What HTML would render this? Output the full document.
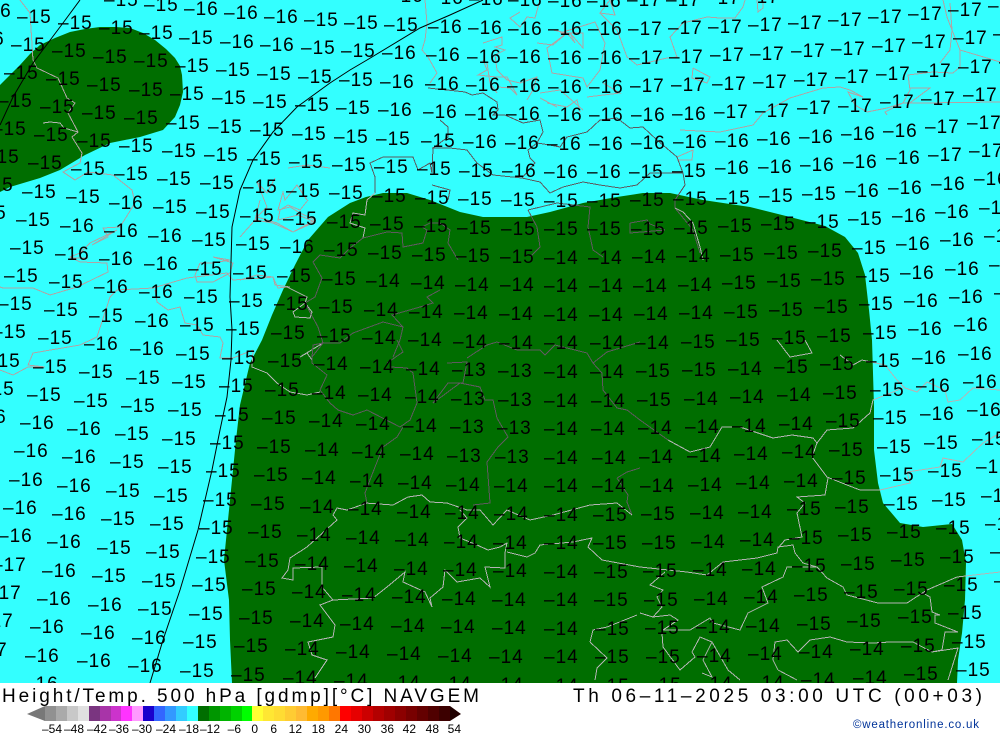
<!DOCTYPE html>
<html><head><meta charset="utf-8"><title>Height/Temp. 500 hPa NAVGEM</title>
<style>
html,body{margin:0;padding:0;background:#fff}
svg{display:block;font-family:"Liberation Sans",sans-serif}
.l{fill:none;stroke:#b0a4a4;stroke-width:1}
.g{fill:none;stroke:#b4b4b4;stroke-width:1}
.d{fill:none;stroke:#5e5a5e;stroke-width:1}
.k{fill:none;stroke:#000;stroke-width:1}
</style></head><body>
<svg width="1000" height="733" viewBox="0 0 1000 733" xmlns="http://www.w3.org/2000/svg">
<rect width="1000" height="733" fill="#33ffff"/>
<polygon fill="#006e00" points="232,683 230,640 229,600 224,560 228,520 232,480 236,440 240,405 250,363 262,340 272,315 283,290 295,265 308,240 328,217 350,203 366,197 383,193 407,193 430,200 460,212 483,217 527,217 550,212 583,203 617,197 643,193 670,193 703,200 750,207 790,217 825,226 845,237 858,253 865,275 869,310 872,340 873,373 874,407 874,450 878,483 883,503 900,523 923,527 952,524 962,540 966,563 965,600 962,633 958,660 957,683"/>
<polygon fill="#006e00" points="0,85 10,75 20,65 30,54 40,45 55,38 70,32 85,29 100,27 115,27 130,28 143,33 155,40 166,49 175,58 180,66 182,75 183,92 180,105 175,117 163,130 140,137 110,143 85,155 60,170 40,178 10,187 0,192"/>
<g shape-rendering="crispEdges">
<polyline class="l" points="20,0 30,13 33,60 37,68 58,78 67,98 75,103 68,113 78,132 72,137 82,153 80,163 63,172 75,180 88,172 113,175 132,190 135,203 120,227 103,228 108,237 92,245 117,230"/>
<polyline class="g" points="43,123 50,122 60,123 64,128 78,132"/>
<polyline class="l" points="288,168 307,165 330,168"/>
<polyline class="l" points="275,178 267,193 257,182 267,207 257,217 277,223 293,232 315,220 300,213 290,207 278,210 283,192 285,200 297,185 307,200"/>
<polyline class="l" points="425,0 427,23 425,40 422,50 428,57 437,73 430,83"/>
<polyline class="l" points="520,12 510,18 520,27 527,17 535,18 540,0"/>
<polyline class="l" points="483,43 502,37 502,45 495,47 505,50 495,55 497,70 507,80 520,83 537,77 533,90 527,100"/>
<polyline class="l" points="487,63 490,83 497,93"/>
<polyline class="l" points="553,30 567,33 575,43 570,33 583,48 583,33 560,33"/>
<polyline class="l" points="537,43 553,45 567,33 547,48 552,73 583,78 587,87 600,70 605,43 595,22 560,33"/>
<polyline class="l" points="610,0 600,13 615,15 610,0"/>
<polyline class="l" points="600,13 617,30 627,57 637,65 667,58 677,57 670,37 683,23 707,17 720,18 735,18 743,7 745,0"/>
<polyline class="l" points="693,68 710,77 707,83 692,78 693,68"/>
<polyline class="l" points="757,0 758,12 763,8 763,0"/>
<polyline class="l" points="540,93 560,90 583,110"/>
<polyline class="l" points="540,98 557,107"/>
<polyline class="l" points="587,97 620,93 603,83"/>
<polyline class="l" points="483,60 487,70 478,75 497,77 507,77 517,95 510,88 498,87"/>
<polyline class="l" points="547,103 567,107 577,100 580,112"/>
<polyline class="l" points="680,130 720,132 753,125 763,113 790,98 823,88 840,87 850,90 863,97 848,92 855,105 867,112 887,108 903,103 920,103 1000,102"/>
<polyline class="l" points="887,115 885,112 903,103 910,90 908,75 933,72 953,73 960,67 960,50 952,30 947,17 943,0"/>
<polyline class="l" points="940,63 950,50 952,30 950,3"/>
<polyline class="l" points="960,50 987,58 1000,62"/>
<polyline class="l" points="910,88 930,88 907,105"/>
<polyline class="l" points="677,157 693,150 692,160 677,160"/>
<polyline class="l" points="0,287 3,288 33,288 50,295 77,287 108,272 107,263 80,262 70,257 80,253 90,243 117,230"/>
<polyline class="l" points="72,258 88,258"/>
<polyline class="l" points="0,370 13,375 28,367 45,367 28,365 33,353 80,345 97,337 110,297 117,290 153,288 187,278 227,273 233,280 263,278 273,277 275,285 290,287"/>
<polyline class="l" points="200,263 213,263 230,260 213,257 233,263 230,273 213,282 197,282 195,275 200,263"/>
<polyline class="l" points="155,290 157,302 168,310 180,307 185,323 197,325 203,335 220,337 223,343 220,358 233,358 253,350"/>
<polyline class="g" points="253,350 252,367 267,373 277,383 290,392 307,395 320,392"/>
<polyline class="l" points="260,200 255,220 240,237"/>
<polyline class="l" points="255,220 273,223 293,232 315,222 298,215 278,220 280,210 288,205 300,210 308,200"/>
<polyline class="l" points="240,280 257,275 273,277 278,288 287,287"/>
<polyline class="g" points="287,287 307,297 305,303 312,312 310,318 295,317 293,312 305,303"/>
<polyline class="d" points="428,88 447,90 465,92 472,95 483,93 497,102 498,110 493,115 505,115 523,123 540,120 543,132 537,143 528,150 530,158 535,163 522,178"/>
<polyline class="d" points="537,143 550,145 560,147 567,137 587,132 600,120 617,118 630,128 643,127 657,140 677,157 683,173 685,185 675,200 675,208 693,230 700,253"/>
<polyline class="d" points="432,148 450,148 467,150 477,163 493,175 522,178 540,182 550,193 563,187 583,182 600,185 620,188 637,185 650,173 683,173"/>
<polyline class="d" points="440,120 448,127 448,137 433,148 432,173"/>
<polyline class="d" points="432,185 450,190 448,200"/>
<polyline class="d" points="375,193 375,177 370,163 383,157 413,157 418,170 430,163 432,173"/>
<polyline class="g" points="375,193 367,200 365,215 353,213 350,223 365,228 363,238"/>
<polyline class="d" points="363,238 350,248 340,258 320,255 313,262 322,278 315,297 305,303 318,327 323,343 340,343 353,333 383,322 403,327 400,340 393,357"/>
<polyline class="d" points="363,238 387,232 402,233 403,247 423,243 427,230 422,227 430,223 440,223 450,230 448,243 458,260"/>
<polyline class="d" points="440,290 427,297 433,303 420,307 392,315 403,327"/>
<polyline class="g" points="323,343 300,357 307,353 312,360"/>
<polyline class="d" points="528,210 537,227 540,247 530,257"/>
<polyline class="d" points="528,210 557,203 590,207 588,227 593,250 603,257"/>
<polyline class="d" points="630,223 647,220 650,224 665,230 630,233 630,223"/>
<polyline class="g" points="675,208 683,212 693,223 700,247 703,260"/>
<polyline class="d" points="312,357 313,345 323,343 312,357 312,363 327,375 320,390 330,403 338,410 353,415 367,410 400,427 410,420 417,403 413,373 407,368 390,367"/>
<polyline class="d" points="403,427 397,437 383,447 375,467 365,493 367,503"/>
<polyline class="d" points="447,363 467,362 463,383 448,383 433,403 460,383 480,387 485,400 493,400 497,418 508,437 498,447 487,462 490,503 473,505"/>
<polyline class="d" points="397,340 403,352 387,363"/>
<polyline class="d" points="467,358 487,345 497,342 517,350 530,350 540,350 545,355 555,345 587,353 593,363 607,352 640,342"/>
<polyline class="d" points="593,363 602,373 603,390 617,408 627,410 640,420 668,440"/>
<polyline class="d" points="617,478 627,472 640,468"/>
<polyline class="d" points="617,478 628,495 627,502 632,515"/>
<polyline class="g" points="668,440 690,452 710,447 722,427 740,427 773,438 792,435 813,438 817,443 812,457 827,477 847,485 860,490 880,490 910,483 907,472 940,467 943,458 963,462 983,443 1000,433"/>
<polyline class="g" points="817,443 827,430 853,428 870,413 873,400 903,388"/>
<polyline class="g" points="828,478 825,495 797,497 805,503 797,513 802,537 785,540 778,548"/>
<polyline class="g" points="777,340 790,357 812,353 805,340"/>
<polyline class="g" points="840,355 853,365 862,360 885,365 897,380 905,388 917,392 927,382 945,390 948,402 960,400 973,388 1000,390"/>
<polyline class="g" points="367,503 347,510 337,508 333,515 337,520 307,547 290,558 288,570 282,578 293,580 293,568 322,567 322,587 333,600 320,605 335,625 333,637 308,642 312,655 327,660 315,678"/>
<polyline class="g" points="365,503 393,505 408,497 422,495 430,502 447,503 467,510 480,510 493,525 507,510 530,520 553,515 590,505 617,503 632,515"/>
<polyline class="g" points="333,600 373,598 387,587 405,572 403,582 425,592 432,607 430,598 443,587 445,570 457,582 480,578 490,587 485,567 505,568 505,553 507,543 500,547 488,550 477,545 460,538 458,527 467,518 460,510"/>
<polyline class="g" points="507,552 527,557 535,553 540,545 573,542 592,538 588,547 602,560 640,567 687,572 707,575 723,562 757,558 777,553 778,547 793,545 795,553 803,563 817,567 827,578 843,587 847,595 878,603 907,603 927,590 957,577 1000,572"/>
<polyline class="g" points="640,613 653,617 670,615 678,620 663,630 690,630 710,618 713,623 740,630 748,613 768,603 762,587 783,577 787,567 817,567"/>
<polyline class="g" points="650,585 665,572 650,585 663,590 657,597 662,607 653,617"/>
<polyline class="g" points="662,633 663,647 680,670 695,657 692,652 700,637 712,642 728,670 740,680"/>
<polyline class="g" points="712,642 703,660 712,677 702,673"/>
<polyline class="g" points="778,670 773,660 775,642 787,640 798,652 810,640 830,637 847,642 873,643 890,642 913,642 932,652 942,650 945,632 958,632 935,623 935,615 940,615 932,612 930,597 923,593"/>
<polyline class="g" points="778,670 797,680"/>
<polyline class="g" points="932,652 958,648 948,680"/>
<polyline class="g" points="590,642 593,630 607,627 637,615"/>
<polyline class="g" points="590,642 607,658 597,668 595,680"/>
</g>
<polyline class="k" points="80,0 63,23 33,63 13,97 0,125"/>
<polyline class="k" points="483,0 450,15 420,28 367,60 350,70 330,83 297,107 273,132 253,160 240,190 232,227 230,297 232,330 231,360 227,397 220,430 212,470 198,530 180,590 163,640 150,683"/>
<g transform="translate(-23,6)" font-size="19" letter-spacing="1" fill="#000">
<g transform="translate(4,0)"><text x="408" y="-4">–16</text><text x="448" y="-2">–16</text><text x="488" y="-1">–16</text><text x="527" y="0">–16</text><text x="567" y="1">–16</text><text x="606" y="1">–16</text><text x="646" y="0">–17</text><text x="685" y="0">–17</text><text x="725" y="-2">–17</text><text x="764" y="-3">–17</text></g>
<text x="127" y="0">–15</text><text x="167" y="5">–15</text><text x="207" y="9">–16</text><text x="247" y="13">–16</text><text x="287" y="17">–16</text><text x="327" y="20">–15</text><text x="367" y="23">–15</text><text x="407" y="25">–15</text><g transform="translate(4,0)"><text x="447" y="27">–16</text><text x="487" y="28">–16</text><text x="527" y="29">–16</text><text x="567" y="29">–16</text><text x="607" y="29">–16</text><text x="647" y="29">–17</text><text x="687" y="28">–17</text><text x="727" y="27">–17</text><text x="767" y="25">–17</text><text x="807" y="23">–17</text><text x="847" y="20">–17</text><text x="887" y="17">–17</text><text x="927" y="14">–17</text><text x="967" y="10">–17</text><text x="1007" y="6">–17</text></g>
<text x="0" y="11">–16</text><text x="40" y="17">–15</text><text x="81" y="23">–15</text><text x="122" y="28">–15</text><text x="162" y="33">–15</text><text x="202" y="38">–15</text><text x="243" y="42">–16</text><text x="283" y="45">–16</text><text x="324" y="48">–15</text><text x="364" y="51">–15</text><text x="405" y="53">–16</text><g transform="translate(4,0)"><text x="445" y="55">–16</text><text x="486" y="57">–16</text><text x="526" y="57">–16</text><text x="567" y="58">–16</text><text x="607" y="58">–16</text><text x="648" y="58">–17</text><text x="688" y="57">–17</text><text x="729" y="55">–17</text><text x="769" y="54">–17</text><text x="810" y="51">–17</text><text x="850" y="49">–17</text><text x="891" y="46">–17</text><text x="931" y="42">–17</text><text x="972" y="38">–17</text><text x="1012" y="34">–17</text></g>
<text x="-7" y="39">–16</text><text x="34" y="45">–15</text><text x="75" y="51">–15</text><text x="116" y="57">–15</text><text x="157" y="61">–15</text><text x="198" y="66">–15</text><text x="239" y="70">–15</text><text x="280" y="74">–15</text><text x="321" y="77">–15</text><text x="362" y="80">–15</text><text x="403" y="82">–16</text><g transform="translate(4,0)"><text x="444" y="84">–16</text><text x="485" y="85">–16</text><text x="526" y="86">–16</text><text x="567" y="87">–16</text><text x="608" y="87">–16</text><text x="649" y="86">–17</text><text x="690" y="85">–17</text><text x="731" y="84">–17</text><text x="772" y="82">–17</text><text x="813" y="80">–17</text><text x="854" y="77">–17</text><text x="895" y="74">–17</text><text x="936" y="71">–17</text><text x="977" y="67">–17</text><text x="1018" y="62">–17</text></g>
<text x="27" y="73">–15</text><text x="69" y="79">–15</text><text x="110" y="85">–15</text><text x="152" y="90">–15</text><text x="193" y="94">–15</text><text x="235" y="98">–15</text><text x="276" y="102">–15</text><text x="318" y="105">–15</text><text x="359" y="108">–15</text><text x="401" y="110">–16</text><g transform="translate(4,0)"><text x="442" y="112">–16</text><text x="484" y="114">–16</text><text x="525" y="114">–16</text><text x="567" y="115">–16</text><text x="608" y="115">–16</text><text x="650" y="115">–16</text><text x="691" y="114">–16</text><text x="733" y="112">–17</text><text x="774" y="111">–17</text><text x="816" y="108">–17</text><text x="857" y="106">–17</text><text x="899" y="102">–17</text><text x="940" y="99">–17</text><text x="982" y="95">–17</text></g>
<text x="21" y="101">–15</text><text x="63" y="107">–15</text><text x="105" y="113">–15</text><text x="147" y="118">–15</text><text x="189" y="123">–15</text><text x="231" y="127">–15</text><text x="273" y="130">–15</text><text x="315" y="134">–15</text><text x="357" y="137">–15</text><text x="399" y="139">–15</text><g transform="translate(3,0)"><text x="441" y="141">–15</text><text x="483" y="142">–16</text><text x="525" y="143">–16</text><text x="567" y="144">–16</text><text x="609" y="144">–16</text><text x="651" y="143">–16</text><text x="693" y="142">–16</text><text x="735" y="141">–16</text><text x="777" y="139">–16</text><text x="819" y="137">–16</text><text x="861" y="134">–16</text><text x="903" y="131">–16</text><text x="945" y="127">–17</text><text x="987" y="123">–17</text></g>
<text x="15" y="129">–15</text><text x="57" y="135">–15</text><text x="100" y="141">–15</text><text x="142" y="146">–15</text><text x="185" y="151">–15</text><text x="227" y="155">–15</text><text x="270" y="159">–15</text><text x="312" y="162">–15</text><text x="355" y="165">–15</text><text x="397" y="167">–15</text><text x="440" y="169">–15</text><text x="482" y="171">–15</text><text x="525" y="171">–16</text><text x="567" y="172">–16</text><text x="610" y="172">–16</text><text x="652" y="172">–15</text><text x="695" y="171">–15</text><text x="738" y="168">–16</text><text x="781" y="167">–16</text><text x="823" y="165">–16</text><text x="866" y="162">–16</text><text x="909" y="158">–16</text><text x="951" y="155">–17</text><text x="992" y="151">–17</text>
<text x="8" y="157">–15</text><text x="51" y="163">–15</text><text x="94" y="169">–15</text><text x="137" y="174">–15</text><text x="180" y="179">–15</text><text x="223" y="183">–15</text><text x="266" y="187">–15</text><text x="309" y="191">–15</text><text x="352" y="193">–15</text><text x="395" y="196">–15</text><text x="438" y="198">–15</text><text x="481" y="199">–15</text><text x="524" y="200">–15</text><text x="567" y="201">–15</text><text x="610" y="201">–15</text><text x="653" y="200">–15</text><text x="696" y="199">–15</text><text x="739" y="198">–15</text><text x="782" y="196">–15</text><text x="825" y="194">–15</text><text x="868" y="191">–16</text><text x="911" y="188">–16</text><text x="954" y="184">–16</text><text x="997" y="179">–16</text>
<text x="2" y="185">–15</text><text x="45" y="192">–15</text><text x="89" y="197">–15</text><text x="132" y="203">–16</text><text x="176" y="207">–15</text><text x="219" y="212">–15</text><text x="263" y="216">–15</text><text x="306" y="219">–15</text><text x="350" y="222">–15</text><text x="393" y="224">–15</text><text x="437" y="226">–15</text><text x="480" y="228">–15</text><text x="524" y="229">–15</text><text x="567" y="229">–15</text><text x="610" y="229">–15</text><text x="654" y="229">–15</text><text x="697" y="228">–15</text><text x="741" y="226">–15</text><text x="784" y="224">–15</text><text x="828" y="222">–15</text><text x="871" y="219">–15</text><text x="915" y="216">–16</text><text x="958" y="212">–16</text><text x="1002" y="208">–16</text>
<text x="-5" y="213">–15</text><text x="39" y="220">–15</text><text x="83" y="226">–16</text><text x="127" y="231">–16</text><text x="171" y="236">–16</text><text x="215" y="240">–15</text><text x="259" y="244">–15</text><text x="303" y="247">–16</text><text x="347" y="250">–15</text><text x="391" y="253">–15</text><text x="435" y="255">–15</text><text x="479" y="256">–15</text><text x="523" y="257">–15</text><text x="567" y="258">–14</text><text x="611" y="258">–14</text><text x="655" y="257">–14</text><text x="699" y="256">–14</text><text x="743" y="255">–15</text><text x="787" y="253">–15</text><text x="831" y="251">–15</text><text x="875" y="248">–15</text><text x="919" y="244">–16</text><text x="963" y="240">–16</text><text x="1007" y="236">–16</text>
<text x="33" y="248">–15</text><text x="78" y="254">–16</text><text x="122" y="259">–16</text><text x="167" y="264">–16</text><text x="211" y="269">–15</text><text x="256" y="273">–15</text><text x="300" y="276">–15</text><text x="345" y="279">–15</text><text x="389" y="281">–14</text><text x="434" y="283">–14</text><text x="478" y="285">–14</text><text x="523" y="285">–14</text><text x="567" y="286">–14</text><text x="612" y="286">–14</text><text x="656" y="286">–14</text><text x="701" y="285">–14</text><text x="745" y="283">–15</text><text x="790" y="281">–15</text><text x="834" y="279">–15</text><text x="879" y="276">–15</text><text x="923" y="273">–16</text><text x="968" y="269">–16</text><text x="1012" y="265">–16</text>
<text x="27" y="276">–15</text><text x="72" y="282">–15</text><text x="117" y="287">–16</text><text x="162" y="292">–16</text><text x="207" y="297">–15</text><text x="252" y="301">–15</text><text x="297" y="304">–15</text><text x="342" y="307">–15</text><text x="387" y="310">–14</text><text x="432" y="312">–14</text><text x="477" y="313">–14</text><text x="522" y="314">–14</text><text x="567" y="315">–14</text><text x="612" y="315">–14</text><text x="657" y="314">–14</text><text x="702" y="313">–14</text><text x="747" y="312">–15</text><text x="792" y="310">–15</text><text x="837" y="307">–15</text><text x="882" y="304">–15</text><text x="927" y="301">–16</text><text x="972" y="297">–16</text><text x="1017" y="293">–16</text>
<text x="21" y="304">–15</text><text x="67" y="310">–15</text><text x="112" y="316">–15</text><text x="158" y="321">–16</text><text x="203" y="325">–15</text><text x="249" y="329">–15</text><text x="294" y="333">–15</text><text x="340" y="336">–15</text><text x="385" y="338">–14</text><text x="431" y="340">–14</text><text x="476" y="342">–14</text><text x="522" y="343">–14</text><text x="567" y="343">–14</text><text x="613" y="343">–14</text><text x="658" y="343">–14</text><text x="704" y="342">–15</text><text x="749" y="340">–15</text><text x="795" y="338">–15</text><text x="840" y="336">–15</text><text x="886" y="333">–15</text><text x="931" y="329">–16</text><text x="977" y="325">–16</text>
<text x="15" y="332">–15</text><text x="61" y="338">–15</text><text x="107" y="344">–16</text><text x="153" y="349">–16</text><text x="199" y="354">–15</text><text x="245" y="358">–15</text><text x="291" y="361">–15</text><text x="337" y="364">–14</text><text x="383" y="367">–14</text><text x="429" y="369">–14</text><text x="475" y="370">–13</text><text x="521" y="371">–13</text><text x="567" y="372">–14</text><text x="613" y="372">–14</text><text x="659" y="371">–15</text><text x="705" y="370">–15</text><text x="751" y="369">–14</text><text x="797" y="367">–15</text><text x="843" y="364">–15</text><text x="889" y="361">–15</text><text x="935" y="358">–16</text><text x="981" y="354">–16</text>
<text x="9" y="361">–15</text><text x="56" y="367">–15</text><text x="102" y="372">–15</text><text x="149" y="378">–15</text><text x="195" y="382">–15</text><text x="242" y="386">–15</text><text x="288" y="390">–15</text><text x="335" y="393">–14</text><text x="381" y="395">–14</text><text x="428" y="397">–14</text><text x="474" y="399">–13</text><text x="521" y="400">–13</text><text x="567" y="401">–14</text><text x="614" y="401">–14</text><text x="660" y="400">–15</text><text x="707" y="399">–14</text><text x="753" y="397">–14</text><text x="800" y="395">–14</text><text x="846" y="393">–15</text><text x="893" y="390">–15</text><text x="939" y="386">–16</text><text x="986" y="382">–16</text>
<text x="3" y="389">–15</text><text x="50" y="395">–15</text><text x="97" y="401">–15</text><text x="144" y="406">–15</text><text x="191" y="410">–15</text><text x="238" y="415">–15</text><text x="285" y="418">–15</text><text x="332" y="421">–14</text><text x="379" y="424">–14</text><text x="426" y="426">–14</text><text x="473" y="427">–13</text><text x="520" y="428">–13</text><text x="567" y="429">–14</text><text x="614" y="429">–14</text><text x="661" y="428">–14</text><text x="708" y="427">–14</text><text x="755" y="426">–14</text><text x="802" y="424">–14</text><text x="849" y="421">–15</text><text x="896" y="418">–15</text><text x="943" y="414">–16</text><text x="990" y="410">–16</text>
<g transform="translate(-2,0)"><text x="-3" y="417">–16</text><text x="45" y="423">–16</text><text x="92" y="429">–16</text><text x="140" y="434">–15</text><text x="187" y="439">–15</text><text x="235" y="443">–15</text><text x="282" y="447">–15</text><text x="330" y="450">–14</text><text x="377" y="452">–14</text><text x="425" y="454">–14</text><text x="472" y="456">–13</text><text x="520" y="457">–13</text></g><text x="567" y="458">–14</text><text x="615" y="458">–14</text><text x="662" y="457">–14</text><text x="710" y="456">–14</text><text x="757" y="454">–14</text><text x="805" y="452">–14</text><text x="852" y="450">–15</text><text x="900" y="447">–15</text><text x="947" y="443">–15</text><text x="995" y="439">–15</text>
<g transform="translate(-2,0)"><text x="39" y="451">–16</text><text x="87" y="457">–16</text><text x="135" y="462">–15</text><text x="183" y="467">–15</text><text x="231" y="471">–15</text><text x="279" y="475">–15</text><text x="327" y="478">–14</text><text x="375" y="481">–14</text><text x="423" y="483">–14</text><text x="471" y="485">–14</text><text x="519" y="486">–14</text></g><text x="567" y="486">–14</text><text x="615" y="486">–14</text><text x="663" y="486">–14</text><text x="711" y="485">–14</text><text x="759" y="483">–14</text><text x="807" y="481">–14</text><text x="855" y="478">–15</text><text x="903" y="475">–15</text><text x="951" y="471">–15</text><text x="999" y="467">–15</text>
<g transform="translate(-2,0)"><text x="34" y="480">–16</text><text x="82" y="486">–16</text><text x="131" y="491">–15</text><text x="179" y="496">–15</text><text x="228" y="500">–15</text><text x="276" y="504">–15</text><text x="325" y="507">–14</text><text x="373" y="509">–14</text><text x="422" y="512">–14</text><text x="470" y="513">–14</text><text x="519" y="514">–14</text></g><text x="567" y="515">–14</text><text x="616" y="515">–15</text><text x="664" y="514">–15</text><text x="713" y="513">–14</text><text x="761" y="512">–14</text><text x="810" y="509">–15</text><text x="858" y="507">–15</text><text x="907" y="504">–15</text><text x="955" y="500">–15</text><text x="1004" y="496">–15</text>
<g transform="translate(-2,0)"><text x="28" y="508">–16</text><text x="77" y="514">–16</text><text x="126" y="519">–15</text><text x="175" y="524">–15</text><text x="224" y="528">–15</text><text x="273" y="532">–15</text><text x="322" y="535">–14</text><text x="371" y="538">–14</text><text x="420" y="540">–14</text><text x="469" y="542">–14</text><text x="518" y="543">–14</text></g><text x="567" y="543">–14</text><text x="616" y="543">–15</text><text x="665" y="543">–15</text><text x="714" y="542">–14</text><text x="763" y="540">–14</text><text x="812" y="538">–15</text><text x="861" y="535">–15</text><text x="910" y="532">–15</text><text x="959" y="528">–15</text><text x="1008" y="524">–15</text>
<g transform="translate(-2,0)"><text x="23" y="536">–16</text><text x="72" y="542">–16</text><text x="122" y="548">–15</text><text x="171" y="552">–15</text><text x="221" y="557">–15</text><text x="270" y="561">–15</text><text x="320" y="564">–14</text><text x="369" y="566">–14</text><text x="419" y="569">–14</text><text x="468" y="570">–14</text><text x="518" y="571">–14</text></g><text x="567" y="572">–14</text><text x="617" y="572">–15</text><text x="666" y="571">–15</text><text x="716" y="570">–14</text><text x="765" y="569">–14</text><text x="815" y="566">–15</text><text x="864" y="564">–15</text><text x="914" y="560">–15</text><text x="963" y="557">–15</text><text x="1013" y="552">–15</text>
<g transform="translate(-2,0)"><text x="17" y="565">–17</text><text x="67" y="571">–16</text><text x="117" y="576">–15</text><text x="167" y="581">–15</text><text x="217" y="585">–15</text><text x="267" y="589">–15</text><text x="317" y="592">–14</text><text x="367" y="595">–14</text><text x="417" y="597">–14</text><text x="467" y="599">–14</text><text x="517" y="600">–14</text></g><text x="567" y="600">–14</text><text x="617" y="600">–15</text><text x="667" y="600">–15</text><text x="717" y="599">–14</text><text x="767" y="597">–14</text><text x="817" y="595">–15</text><text x="867" y="592">–15</text><text x="917" y="589">–15</text><text x="967" y="585">–15</text><text x="1017" y="581">–15</text>
<g transform="translate(-2,0)"><text x="12" y="593">–17</text><text x="62" y="599">–16</text><text x="113" y="605">–16</text><text x="163" y="609">–15</text><text x="214" y="614">–15</text><text x="264" y="618">–15</text><text x="315" y="621">–14</text><text x="365" y="624">–14</text><text x="416" y="626">–14</text><text x="466" y="627">–14</text><text x="517" y="628">–14</text></g><text x="567" y="629">–14</text><text x="618" y="629">–15</text><text x="668" y="628">–15</text><text x="719" y="627">–14</text><text x="769" y="626">–14</text><text x="820" y="624">–15</text><text x="870" y="621">–15</text><text x="921" y="617">–15</text><text x="971" y="613">–15</text>
<g transform="translate(-4,0)"><text x="6" y="621">–17</text><text x="57" y="627">–16</text><text x="108" y="633">–16</text><text x="159" y="638">–16</text><text x="210" y="642">–15</text><text x="261" y="646">–15</text><text x="312" y="649">–14</text><text x="363" y="652">–14</text><text x="414" y="654">–14</text><text x="465" y="656">–14</text><text x="516" y="657">–14</text></g><text x="567" y="657">–14</text><text x="618" y="657">–15</text><text x="669" y="657">–15</text><text x="720" y="656">–14</text><text x="771" y="654">–14</text><text x="822" y="652">–14</text><text x="873" y="649">–14</text><text x="924" y="646">–15</text><text x="975" y="642">–15</text>
<g transform="translate(-4,0)"><text x="0" y="650">–17</text><text x="52" y="656">–16</text><text x="104" y="661">–16</text><text x="155" y="666">–16</text><text x="207" y="671">–15</text><text x="258" y="675">–15</text><text x="310" y="678">–14</text><text x="361" y="681">–14</text><text x="413" y="683">–14</text><text x="464" y="684">–14</text><text x="516" y="685">–14</text></g><text x="567" y="686">–14</text><text x="618" y="686">–15</text><text x="670" y="685">–15</text><text x="721" y="684">–14</text><text x="773" y="683">–14</text><text x="824" y="680">–14</text><text x="876" y="678">–14</text><text x="927" y="674">–15</text><text x="979" y="670">–15</text>
<text x="47" y="684">–16</text>
</g>
<rect x="0" y="683" width="1000" height="50" fill="#fff"/>
<text x="2" y="702" font-size="19" textLength="477" lengthAdjust="spacing" fill="#000">Height/Temp. 500 hPa [gdmp][°C] NAVGEM</text>
<text x="573" y="702" font-size="19" textLength="409" lengthAdjust="spacing" fill="#000">Th 06–11–2025 03:00 UTC (00+03)</text>
<polygon points="27,714 45,706 45,721" fill="#787878"/>
<rect x="45" y="706" width="11" height="15" fill="#919191"/><rect x="56" y="706" width="11" height="15" fill="#aaaaaa"/><rect x="67" y="706" width="11" height="15" fill="#c8c8c8"/><rect x="78" y="706" width="11" height="15" fill="#e0e0e0"/><rect x="89" y="706" width="11" height="15" fill="#7a3580"/><rect x="100" y="706" width="11" height="15" fill="#a834a8"/><rect x="111" y="706" width="10" height="15" fill="#cc33cc"/><rect x="121" y="706" width="11" height="15" fill="#ff33ff"/><rect x="132" y="706" width="11" height="15" fill="#ff99ff"/><rect x="143" y="706" width="11" height="15" fill="#1a00cc"/><rect x="154" y="706" width="11" height="15" fill="#3366ff"/><rect x="165" y="706" width="11" height="15" fill="#3399ff"/><rect x="176" y="706" width="11" height="15" fill="#33ccff"/><rect x="187" y="706" width="11" height="15" fill="#33ffff"/><rect x="198" y="706" width="11" height="15" fill="#006e00"/><rect x="209" y="706" width="11" height="15" fill="#009600"/><rect x="220" y="706" width="11" height="15" fill="#00b400"/><rect x="231" y="706" width="11" height="15" fill="#00d200"/><rect x="242" y="706" width="10" height="15" fill="#00ff00"/><rect x="252" y="706" width="11" height="15" fill="#ffff33"/><rect x="263" y="706" width="11" height="15" fill="#ffe733"/><rect x="274" y="706" width="11" height="15" fill="#ffdc33"/><rect x="285" y="706" width="11" height="15" fill="#ffcc33"/><rect x="296" y="706" width="11" height="15" fill="#ffbb33"/><rect x="307" y="706" width="11" height="15" fill="#ffaa00"/><rect x="318" y="706" width="11" height="15" fill="#ff9900"/><rect x="329" y="706" width="11" height="15" fill="#ff7700"/><rect x="340" y="706" width="11" height="15" fill="#ff0000"/><rect x="351" y="706" width="11" height="15" fill="#e60000"/><rect x="362" y="706" width="11" height="15" fill="#cc0000"/><rect x="373" y="706" width="11" height="15" fill="#b30000"/><rect x="384" y="706" width="11" height="15" fill="#a00000"/><rect x="395" y="706" width="11" height="15" fill="#8c0000"/><rect x="406" y="706" width="11" height="15" fill="#780000"/><rect x="417" y="706" width="11" height="15" fill="#640000"/><rect x="428" y="706" width="11" height="15" fill="#500000"/><rect x="439" y="706" width="11" height="15" fill="#3c0000"/>
<polygon points="450,706 461,714 450,721" fill="#200000"/>
<g font-size="12" fill="#000" text-anchor="end">
<text x="62" y="733">–54</text><text x="84" y="733">–48</text><text x="107" y="733">–42</text><text x="129" y="733">–36</text><text x="152" y="733">–30</text><text x="176" y="733">–24</text><text x="199" y="733">–18</text><text x="220" y="733">–12</text><text x="241" y="733">–6</text><text x="258" y="733">0</text><text x="277" y="733">6</text><text x="302" y="733">12</text><text x="325" y="733">18</text><text x="348" y="733">24</text><text x="371" y="733">30</text><text x="394" y="733">36</text><text x="416" y="733">42</text><text x="439" y="733">48</text><text x="461" y="733">54</text>
</g>
<text x="853" y="728" font-size="11.5" textLength="126" lengthAdjust="spacing" fill="#003399">©weatheronline.co.uk</text>
</svg>
</body></html>
